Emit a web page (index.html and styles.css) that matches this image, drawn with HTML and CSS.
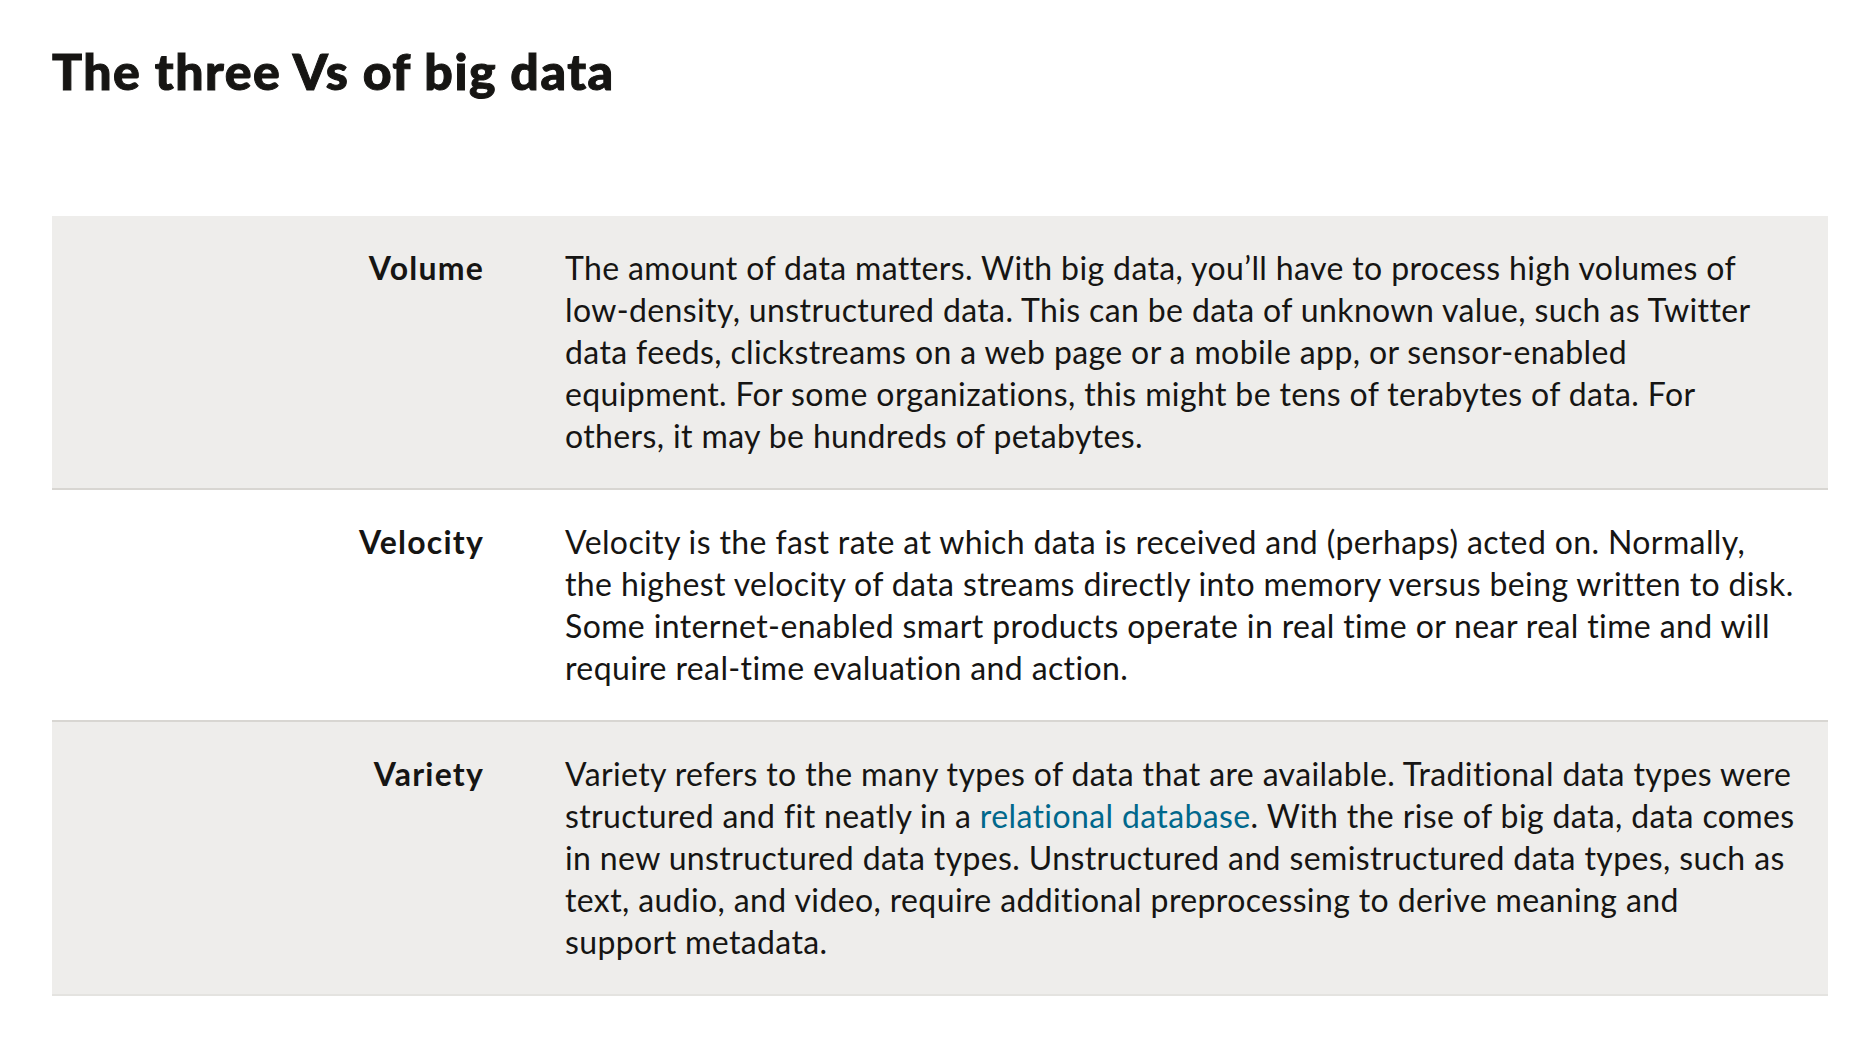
FILE: index.html
```html
<!DOCTYPE html>
<html lang="en">
<head>
<meta charset="utf-8">
<title>The three Vs of big data</title>
<link rel="stylesheet" href="styles.css">
</head>
<body>
<main class="page">
  <h1 class="title">The three Vs of big data</h1>
  <div class="vtable">
    <div class="vrow shaded">
      <div class="vlabel">Volume</div>
      <div class="vdesc">The amount of data matters. With big data, you’ll have to process high volumes of<br>low-density, unstructured data. This can be data of unknown value, such as Twitter<br>data feeds, clickstreams on a web page or a mobile app, or sensor-enabled<br>equipment. For some organizations, this might be tens of terabytes of data. For<br>others, it may be hundreds of petabytes.</div>
    </div>
    <div class="vrow">
      <div class="vlabel">Velocity</div>
      <div class="vdesc">Velocity is the fast rate at which data is received and (perhaps) acted on. Normally,<br>the highest velocity of data streams directly into memory versus being written to disk.<br>Some internet-enabled smart products operate in real time or near real time and will<br>require real-time evaluation and action.</div>
    </div>
    <div class="vrow shaded last">
      <div class="vlabel">Variety</div>
      <div class="vdesc">Variety refers to the many types of data that are available. Traditional data types were<br>structured and fit neatly in a <a class="link" href="#">relational database</a>. With the rise of big data, data comes<br>in new unstructured data types. Unstructured and semistructured data types, such as<br>text, audio, and video, require additional preprocessing to derive meaning and<br>support metadata.</div>
    </div>
  </div>
</main>
</body>
</html>
```
FILE: styles.css
```css
html, body {
  margin: 0;
  padding: 0;
  background: #ffffff;
}
body {
  font-family: Lato, "Open Sans", "Liberation Sans", sans-serif;
  color: #161513;
}
.page {
  padding: 41px 44px 0 52px;
}
.title {
  margin: 0;
  font-family: "Lato Black", Lato, "Open Sans", sans-serif;
  font-size: 50px;
  line-height: 1.2;
  font-weight: 900;
  letter-spacing: 1.5px;
  -webkit-text-stroke: 1px #161513;
}
.vtable {
  margin-top: 115px;
}
.vrow {
  display: grid;
  grid-template-columns: 432px 1fr;
  column-gap: 81px;
  padding: 31px 0 31px 0;
  border-bottom: 2px solid #d8d6d2;
  font-size: 32px;
  line-height: 42px;
}
.vrow.shaded {
  background: #eeedeb;
}
.vrow.last {
  border-bottom-color: #e4e3e0;
}
.vlabel {
  font-weight: 700;
  text-align: right;
  letter-spacing: 1.2px;
}
.vdesc {
  font-weight: 400;
  letter-spacing: 0.38px;
  white-space: nowrap;
}
.link {
  color: #00688c;
  text-decoration: none;
}
```
